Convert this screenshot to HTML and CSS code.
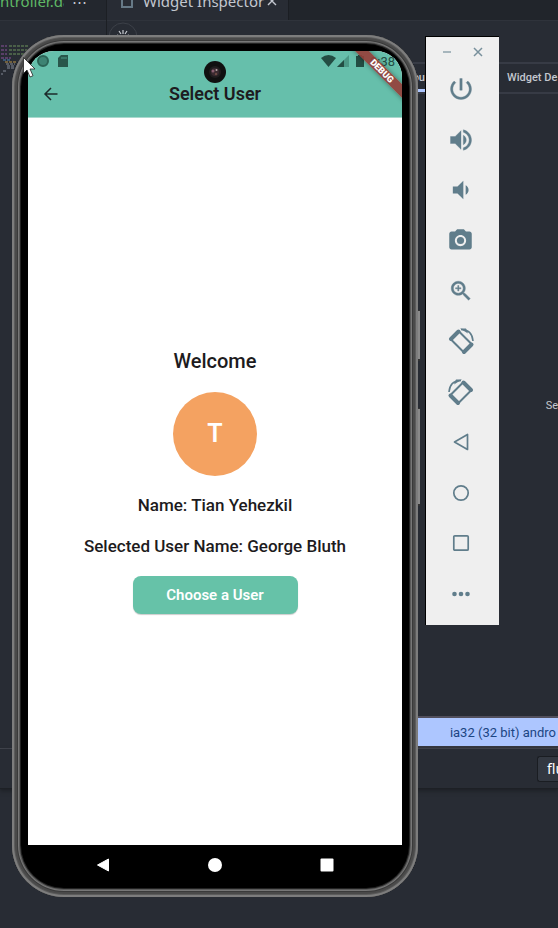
FILE: index.html
```html
<!DOCTYPE html>
<html lang="en">
<head>
<meta charset="utf-8">
<title>Select User</title>
<link rel="stylesheet" href="styles.css">
</head>
<body>
<div class="desktop">
  <div class="ide">
    <div class="ide-main">
      <section class="editor">
        <div class="tab tab-file"><span>ntroller.da</span><span class="dots">⋯</span></div>
        <div class="editor-body">
          <svg class="minimap" width="30" height="34" viewBox="0 0 30 34" aria-hidden="true">
            <g stroke-width="1.5" stroke-dasharray="3 1">
              <path stroke="#69457a" d="M1 2h6M1 6h6M1 10h6M1 14h10"/>
              <path stroke="#55704f" d="M9 2h19M9 6h18M9 10h17"/>
              <path stroke="#40658a" d="M3 16h8"/>
              <path stroke="#8a7342" d="M5 18h12"/>
              <path stroke="#666b76" d="M6 20h9M7 22h8M7 24h7M3 27h3M1 30h2"/>
            </g>
          </svg>
        </div>
      </section>
      <section class="inspector">
        <div class="tabs">
          <div class="tab tab-active">
            <svg width="12" height="14" viewBox="0 0 12 14" aria-hidden="true"><rect x="1" y="1" width="10" height="12" fill="none" stroke="#667986" stroke-width="2"/></svg>
            <span class="tab-name">Widget Inspector</span>
            <svg width="10" height="10" viewBox="0 0 10 10" aria-hidden="true"><path d="M1 1l8 8M9 1l-8 8" stroke="#c3c7cf" stroke-width="1.4"/></svg>
          </div>
        </div>
        <div class="tools">
          <svg width="32" height="30" viewBox="0 0 32 30" aria-hidden="true"><circle cx="16" cy="16" r="14" fill="none" stroke="#3c4048"/><path d="M16 9v4M12 10l2 3M20 10l-2 3M10 14l3 1M22 14l-3 1" stroke="#c9ccd2" stroke-width="1.2"/></svg>
        </div>
        <div class="subtabs"><span class="subtab subtab-on">Layou</span><span class="subtab">Widget De</span></div>
        <div class="details">Se</div>
        <div class="notice">ia32 (32 bit) andro</div>
      </section>
    </div>
    <div class="prompt"><button class="prompt-button">flu</button></div>
    <div class="ide-foot"></div>
  </div>

  <main class="emulator">
    <div class="phone">
      <i class="key key-power"></i><i class="key key-volume"></i>
      <div class="screen">
        <header class="appbar">
          <div class="status">
            <svg width="34" height="14" viewBox="0 0 34 14" aria-hidden="true"><circle cx="7" cy="7" r="5" fill="#3d8373" stroke="#2b6456" stroke-width="2"/><path d="M25 1h7v12h-10V4z" fill="#29564b"/><path d="M26 3v2M28 3v2M30 3v2" stroke="#4b9886"/></svg>
            <div class="status-right">
              <svg width="45" height="14" viewBox="0 0 45 14" aria-hidden="true"><path d="M0 4Q7.500-2 15 4L7.500 13z" fill="#234d43"/><path d="M16 13L28 1v12z" fill="#4b9886"/><path d="M16 13L23 6v7z" fill="#234d43"/><path d="M35 2h2V1h4v1h2v11h-8z" fill="#234d43"/></svg>
              <span>9:38</span>
            </div>
          </div>
          <div class="titlebar">
            <button class="back" aria-label="Back"><svg width="16" height="16" viewBox="0 0 16 16" aria-hidden="true"><path d="M14.500 8H2M8 2L2 8l6 6" fill="none" stroke="#1c2b2b" stroke-width="1.500"/></svg></button>
            <h1>Select User</h1>
          </div>
          <span class="debug">DEBUG</span>
          <svg class="camera" width="22" height="22" viewBox="0 0 22 22" aria-hidden="true"><circle cx="11" cy="11" r="11" fill="#101010"/><circle cx="11" cy="11" r="6" fill="#201d1e"/><circle cx="11" cy="11" r="4" fill="#3a2a30"/><circle cx="9" cy="10" r="1.500" fill="#8b5f70"/><circle cx="12.500" cy="9" r="1" fill="#b5a6a6"/><circle cx="12" cy="13" r="1.200" fill="#6d4a43"/></svg>
        </header>
        <div class="content">
          <h2>Welcome</h2>
          <div class="avatar">T</div>
          <p>Name: Tian Yehezkil</p>
          <p>Selected User Name: George Bluth</p>
          <button class="choose">Choose a User</button>
        </div>
      </div>
      <nav class="navbar">
        <button aria-label="Back"><svg width="14" height="14" viewBox="0 0 14 14" aria-hidden="true"><path d="M1.500 7L12.500 1v12z" fill="#fff" stroke="#fff" stroke-linejoin="round"/></svg></button>
        <button aria-label="Home"><svg width="14" height="14" viewBox="0 0 14 14" aria-hidden="true"><circle cx="7" cy="7" r="7" fill="#fff"/></svg></button>
        <button aria-label="Overview"><svg width="14" height="14" viewBox="0 0 14 14" aria-hidden="true"><rect x=".5" y=".5" width="13" height="13" rx="1" fill="#fff"/></svg></button>
      </nav>
    </div>

    <aside class="toolbar">
      <div class="window-buttons">
        <button aria-label="Minimize"><svg width="10" height="10" viewBox="0 0 10 10" aria-hidden="true"><path d="M1 5h8" stroke="#8fa3ad" stroke-width="1.500"/></svg></button>
        <button aria-label="Close"><svg width="10" height="10" viewBox="0 0 10 10" aria-hidden="true"><path d="M1 1l8 8M9 1L1 9" stroke="#78909c" stroke-width="1.500"/></svg></button>
      </div>
      <div class="actions">
        <button aria-label="Power"><svg width="28" height="28" viewBox="0 0 24 24" aria-hidden="true"><path fill="#607d8b" stroke="#607d8b" stroke-width=".3" d="M13 3h-2v10h2V3zm4.830 2.170l-1.420 1.420C17.990 7.860 19 9.810 19 12c0 3.870-3.130 7-7 7s-7-3.130-7-7c0-2.190 1.010-4.140 2.580-5.420L6.170 5.170C4.230 6.820 3 9.260 3 12c0 4.970 4.030 9 9 9s9-4.030 9-9c0-2.740-1.230-5.180-3.170-6.830z"/></svg></button>
        <button aria-label="Volume up"><svg width="28" height="28" viewBox="0 0 24 24" aria-hidden="true"><path fill="#607d8b" stroke="#607d8b" stroke-width=".3" d="M3 9v6h4l5 5V4L7 9H3zm13.500 3c0-1.770-1.020-3.290-2.500-4.030v8.050c1.480-.73 2.500-2.250 2.500-4.020zM14 3.230v2.060c2.890.86 5 3.540 5 6.710s-2.110 5.850-5 6.710v2.060c4.010-.91 7-4.490 7-8.770s-2.990-7.860-7-8.770z"/></svg></button>
        <button aria-label="Volume down"><svg width="28" height="28" viewBox="0 0 24 24" aria-hidden="true"><path fill="#607d8b" d="M18.500 12c0-1.770-1.020-3.290-2.500-4.030v8.050c1.480-.73 2.500-2.250 2.500-4.020zM5 9v6h4l5 5V4L9 9H5z"/></svg></button>
        <button aria-label="Take screenshot"><svg width="27" height="27" viewBox="0 0 24 24" aria-hidden="true"><circle cx="12" cy="12" r="3.200" fill="#607d8b"/><path fill="#607d8b" d="M9 2L7.170 4H4c-1.100 0-2 .9-2 2v12c0 1.100.9 2 2 2h16c1.100 0 2-.9 2-2V6c0-1.100-.9-2-2-2h-3.170L15 2H9zm3 15c-2.760 0-5-2.240-5-5s2.240-5 5-5 5 2.240 5 5-2.240 5-5 5z"/></svg></button>
        <button aria-label="Zoom"><svg width="26" height="26" viewBox="0 0 24 24" aria-hidden="true"><path fill="#607d8b" stroke="#607d8b" stroke-width=".4" d="M15.500 14h-.79l-.28-.27C15.410 12.590 16 11.110 16 9.500 16 5.910 13.090 3 9.500 3S3 5.910 3 9.500 5.910 16 9.500 16c1.610 0 3.090-.59 4.230-1.570l.27.28v.79l5 4.990L20.490 19l-4.990-5zm-6 0C7.010 14 5 11.990 5 9.500S7.010 5 9.500 5 14 7.010 14 9.500 11.990 14 9.500 14zM12 10h-2v2H9v-2H7V9h2V7h1v2h2v1z"/></svg></button>
        <button aria-label="Rotate left"><svg width="28" height="28" viewBox="0 0 28 28" aria-hidden="true"><g fill="none" stroke="#607d8b"><path d="M11.500 4L25 17.500 17 25.500 3.500 12z" stroke-width="2" stroke-linejoin="round"/><path d="M4 12L11.500 4.500M24.500 17.500L17 25" stroke-width="4" stroke-linecap="round"/><path d="M14 2.500Q25 2.500 26 14" stroke-width="1.600"/></g><path d="M13 1.500h6l2 5z" fill="#607d8b"/></svg></button>
        <button aria-label="Rotate right"><svg width="28" height="28" viewBox="0 0 28 28" aria-hidden="true"><g fill="none" stroke="#607d8b"><path d="M16.500 4L3 17.500l8 8L24.500 12z" stroke-width="2" stroke-linejoin="round"/><path d="M24 12L16.500 4.500M3.500 17.500L11 25" stroke-width="4" stroke-linecap="round"/><path d="M14 2.500Q3 2.500 2 14" stroke-width="1.600"/></g><path d="M15 1.500H9l-2 5z" fill="#607d8b"/></svg></button>
        <button aria-label="Back"><svg width="20" height="20" viewBox="0 0 20 20" aria-hidden="true"><path d="M3.500 10L16.500 2.500v15z" fill="none" stroke="#607d8b" stroke-width="1.700" stroke-linejoin="round"/></svg></button>
        <button aria-label="Home"><svg width="20" height="20" viewBox="0 0 20 20" aria-hidden="true"><circle cx="10" cy="10" r="7.200" fill="none" stroke="#607d8b" stroke-width="1.700"/></svg></button>
        <button aria-label="Overview"><svg width="20" height="20" viewBox="0 0 20 20" aria-hidden="true"><rect x="2.800" y="2.800" width="14.400" height="14.400" rx="1" fill="none" stroke="#607d8b" stroke-width="1.700"/></svg></button>
        <button aria-label="More"><svg width="20" height="20" viewBox="0 0 20 20" aria-hidden="true"><g fill="#607d8b"><circle cx="3.500" cy="10" r="2.300"/><circle cx="10" cy="10" r="2.300"/><circle cx="16.500" cy="10" r="2.300"/></g></svg></button>
      </div>
    </aside>
  </main>

  <svg class="cursor" width="14" height="22" viewBox="0 0 14 22" aria-hidden="true"><path d="M.5.500v16l3.500-3.500 3 7 3-1.300-3-6.700h5z" fill="#fff" stroke="#222" stroke-width=".8"/></svg>
</div>
</body>
</html>
```
FILE: styles.css
```css
* { box-sizing: border-box; }

body {
  margin: 0;
  background: #282c34;
  font-family: Roboto, "Liberation Sans", sans-serif;
}

button {
  margin: 0;
  padding: 0;
  border: 0;
  background: none;
  font: inherit;
  color: inherit;
}

svg { display: block; flex: none; }

.desktop {
  position: relative;
  min-height: 100vh;
  overflow: hidden;
}

/* IDE window behind the emulator */
.ide {
  position: absolute;
  inset: 0;
  display: flex;
  flex-direction: column;
  color: #c3c7cf;
  white-space: nowrap;
}

.ide-main {
  flex: 1;
  display: grid;
  grid-template-columns: 107px minmax(0, 1fr);
  border-bottom: 1px solid #43474f;
}

.editor,
.inspector {
  display: flex;
  flex-direction: column;
  overflow: hidden;
}

.editor { border-right: 1px solid #1c1f24; }

.tab {
  height: 38px;
  display: flex;
  align-items: center;
  font: 15px/20px "Noto Sans", sans-serif;
}

.tab-file {
  margin-top: -18px;
  background: #23272e;
  color: #5fb865;
  gap: 8px;
}

.tab-file span:first-child {
  width: 64px;
  overflow: hidden;
}

.dots { color: #c3c7cf; }

.editor-body {
  flex: 1;
  border-top: 1px solid #2f333b;
  padding-top: 23px;
}

.tabs {
  margin-top: -18px;
  background: #21252b;
  display: flex;
}

.tab-active {
  width: 182px;
  padding-left: 14px;
  background: #282c34;
  border-right: 1px solid #1b1e23;
}

.tab-name { margin: 0 3px 0 10px; }

.tools {
  height: 42px;
  border-top: 1px solid #2f333b;
}

.subtabs {
  height: 32px;
  display: flex;
  justify-content: flex-end;
  border-top: 2px solid #373b45;
  border-bottom: 2px solid #373b45;
  font-size: 11px;
  line-height: 28px;
  font-weight: 500;
}

.subtab { width: 51px; }

.subtab-on {
  width: 40px;
  margin-right: 74px;
  text-align: right;
  padding-right: 8px;
  box-shadow: inset 0 -3px #adc6ff;
}

.details {
  flex: 1;
  display: flex;
  align-items: center;
  justify-content: flex-end;
  font-size: 11px;
}

.notice {
  height: 32px;
  padding-right: 2px;
  display: flex;
  align-items: center;
  justify-content: flex-end;
  border-top: 2px solid #514f5c;
  border-bottom: 2px solid #35373f;
  background: #adc6ff;
  color: #1c4583;
  font-size: 13px;
}

.prompt {
  height: 40px;
  display: flex;
  align-items: center;
  justify-content: flex-end;
  border-bottom: 1px solid #1d2025;
  box-shadow: 0 2px 4px #1d2025;
}

.prompt-button {
  width: 21px;
  height: 26px;
  padding-left: 9px;
  overflow: hidden;
  text-align: left;
  border: 1px solid #1a1d22;
  border-right: 0;
  border-radius: 3px 0 0 3px;
  background: #333841;
  color: #fff;
  font: 14px/20px "Noto Sans", sans-serif;
}

.ide-foot {
  height: 140px;
  border-bottom: 1px solid #1f2228;
}

/* Emulator */
.emulator {
  position: relative;
  display: flex;
  align-items: flex-start;
  gap: 7px;
  padding: 35px 0 32px 12px;
}

.phone {
  position: relative;
  width: 406px;
  padding: 16px 16px 0;
  border-radius: 52px;
  background: #000;
  box-shadow: inset 0 0 0 2px #7d7d7d, inset 0 0 0 3px #5c5c5c,
    inset 0 0 0 5px #4a4a4a, inset 0 0 0 6px #3a3a3a,
    inset 0 0 0 7px #777, inset 0 0 0 8px #5a5a5a,
    inset 0 0 0 9px #222;
}

.key {
  position: absolute;
  left: 100%;
  width: 2px;
  background: #8a8a8a;
  border-top: 1px solid #333;
  border-bottom: 2px solid #333;
}

.key-power { top: 275px; height: 51px; }
.key-volume { top: 373px; height: 98px; }

.screen {
  position: relative;
  min-height: 794px;
  display: flex;
  flex-direction: column;
  overflow: hidden;
  border-radius: 26px 26px 0 0;
  background: #fff;
  color: #1d1b20;
}

.appbar {
  height: 67px;
  background: #66bfab;
  border-bottom: 1px solid #a9d9ce;
}

.status {
  height: 20px;
  padding: 0 7px 0 8px;
  display: flex;
  align-items: center;
  justify-content: space-between;
}

.status-right {
  display: flex;
  align-items: center;
  gap: 4px;
  font-size: 13px;
  color: #234d43;
}

.titlebar {
  height: 46px;
  display: grid;
  grid-template-columns: 46px 1fr 46px;
  align-items: center;
}

.back { justify-self: center; }

h1 {
  margin: 0;
  text-align: center;
  font-size: 18px;
  line-height: 24px;
  font-weight: 600;
}

.debug {
  position: absolute;
  top: 15px;
  right: -20px;
  width: 80px;
  height: 10px;
  transform: rotate(45deg);
  background: #963e38e6;
  box-shadow: 0 0 5px #0006;
  color: #fff;
  text-align: center;
  font-size: 9px;
  line-height: 10px;
  font-weight: 900;
}

.camera {
  position: absolute;
  top: 10px;
  left: 176px;
}

.content {
  flex: 1;
  display: flex;
  flex-direction: column;
  align-items: center;
  justify-content: center;
  gap: 18px;
  padding-bottom: 2px;
}

h2, p {
  margin: 0;
  font-size: 17px;
  line-height: 23px;
  font-weight: 500;
}

h2 {
  font-size: 20px;
  line-height: 26px;
}

.avatar {
  width: 84px;
  height: 84px;
  border-radius: 50%;
  background: #f4a261;
  color: #fff;
  text-align: center;
  font-size: 25px;
  line-height: 84px;
  font-weight: 600;
}

.choose {
  width: 165px;
  height: 38px;
  border-radius: 8px;
  background: #66c2a8;
  box-shadow: 0 1px 1px #0003;
  color: #fff;
  font-size: 15px;
  font-weight: 600;
}

.navbar {
  height: 52px;
  padding: 0 19px 13px;
  display: grid;
  grid-template-columns: 1fr 1fr 1fr;
  align-items: center;
  justify-items: center;
}

.toolbar {
  margin-top: 1px;
  width: 74px;
  min-height: 589px;
  display: flex;
  flex-direction: column;
  padding-bottom: 6px;
  border-top: 1px solid #000;
  border-left: 1px solid #000;
  background: #efefef;
}

.window-buttons {
  height: 27px;
  padding: 3px 16px 0;
  display: flex;
  align-items: center;
  justify-content: space-between;
}

.actions {
  flex: 1;
  display: grid;
  grid-auto-rows: 1fr;
  padding-right: 4px;
}

.actions button {
  display: flex;
  align-items: center;
  justify-content: center;
}

.cursor {
  position: absolute;
  top: 57px;
  left: 23px;
}
```
